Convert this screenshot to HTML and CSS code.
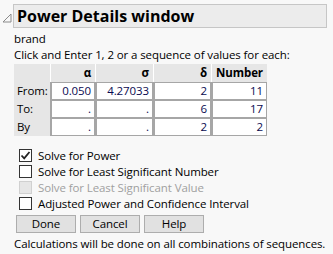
FILE: index.html
```html
<!DOCTYPE html>
<html>
<head>
<meta charset="utf-8">
<link rel="stylesheet" href="styles.css">
</head>
<body>
<div class="node">
  <div class="head">
    <svg class="tri" width="10" height="10" viewBox="0 0 10 10"><path d="M9 1 L9 9 L1 9 Z" fill="none" stroke="#8a8a8a" stroke-width="1"/></svg>
    <div class="title">Power Details window</div>
  </div>
  <div class="body">
    <div class="line">brand</div>
    <div class="line">Click and Enter 1, 2 or a sequence of values for each:</div>
    <div class="grid">
      <div class="hd lab"></div>
      <div class="hd">&alpha;</div>
      <div class="hd">&sigma;</div>
      <div class="hd">&delta;</div>
      <div class="hd">Number</div>
      <div class="lab">From:</div>
      <div class="cell">0.050</div>
      <div class="cell">4.27033</div>
      <div class="cell">2</div>
      <div class="cell">11</div>
      <div class="lab">To:</div>
      <div class="cell">.</div>
      <div class="cell">.</div>
      <div class="cell">6</div>
      <div class="cell">17</div>
      <div class="lab">By</div>
      <div class="cell">.</div>
      <div class="cell">.</div>
      <div class="cell">2</div>
      <div class="cell">2</div>
    </div>
    <div class="checks">
      <label class="chk"><span class="box"><svg width="11" height="11" viewBox="0 0 11 11"><path d="M1.5 5.5 L4.2 8.3 L9.5 2" fill="none" stroke="#222" stroke-width="1.8"/></svg></span>Solve for Power</label>
      <label class="chk"><span class="box"></span>Solve for Least Significant Number</label>
      <label class="chk dis"><span class="box"></span>Solve for Least Significant Value</label>
      <label class="chk"><span class="box"></span>Adjusted Power and Confidence Interval</label>
    </div>
    <div class="btns">
      <button class="btn">Done</button>
      <button class="btn">Cancel</button>
      <button class="btn">Help</button>
    </div>
    <div class="note">Calculations will be done on all combinations of sequences.</div>
  </div>
</div>
</body>
</html>
```
FILE: styles.css
```css
html, body {
  margin: 0;
  padding: 0;
  background: #f8f8f8;
  font-family: "Open Sans", "Noto Sans", sans-serif;
  font-size: 11.5px;
  letter-spacing: -0.1px;
  color: #000;
}
.node {
  padding: 4px 6px 0 2px;
}
.head {
  display: flex;
  align-items: center;
  gap: 1px;
}
.tri {
  margin-top: 3px;
}
.title {
  flex: 1;
  height: 22px;
  background: #ececec;
  border: 1px solid #c6c6c6;
  font-weight: bold;
  font-size: 16px;
  letter-spacing: 0;
  line-height: 22px;
  padding-left: 3px;
}
.body {
  padding-left: 12px;
  padding-top: 3px;
}
.line {
  height: 16px;
  line-height: 16px;
  white-space: nowrap;
}
.grid {
  margin-top: 1px;
  display: grid;
  grid-template-columns: 36px 45px 58px 58px 56px;
  grid-auto-rows: 18px;
  width: max-content;
  background: #e6e6e6;
}
.hd {
  font-weight: bold;
  text-align: right;
  padding-right: 4px;
  line-height: 18px;
  border-left: 1px solid #fff;
}
.hd.lab {
  border-left: none;
}
.lab {
  line-height: 18px;
  padding-left: 3px;
}
.cell {
  background: #fff;
  border: 1px solid #a6a6a6;
  border-left-width: 2px;
  text-align: right;
  padding-right: 3px;
  line-height: 15px;
  color: #0a0a50;
}
.checks {
  display: flex;
  flex-direction: column;
  gap: 3px;
  margin-top: 13px;
  padding-left: 5px;
}
.chk {
  display: flex;
  align-items: center;
  gap: 6px;
  height: 13px;
  line-height: 13px;
  white-space: nowrap;
}
.box {
  width: 11px;
  height: 11px;
  border: 1px solid #333;
  background: #fff;
  display: flex;
}
.dis {
  color: #a0a0a0;
}
.dis .box {
  border-color: #d0d0d0;
  background: #e6e6e6;
}
.btns {
  display: flex;
  gap: 4px;
  margin-top: 5px;
  padding-left: 2px;
}
.btn {
  width: 60px;
  height: 18px;
  background: #e1e1e1;
  border: 1px solid #adadad;
  font-family: inherit;
  font-size: 11.5px;
  letter-spacing: -0.1px;
  padding: 0;
  line-height: 16px;
  color: #000;
}
.note {
  margin-top: 3px;
  line-height: 16px;
  white-space: nowrap;
}
```
